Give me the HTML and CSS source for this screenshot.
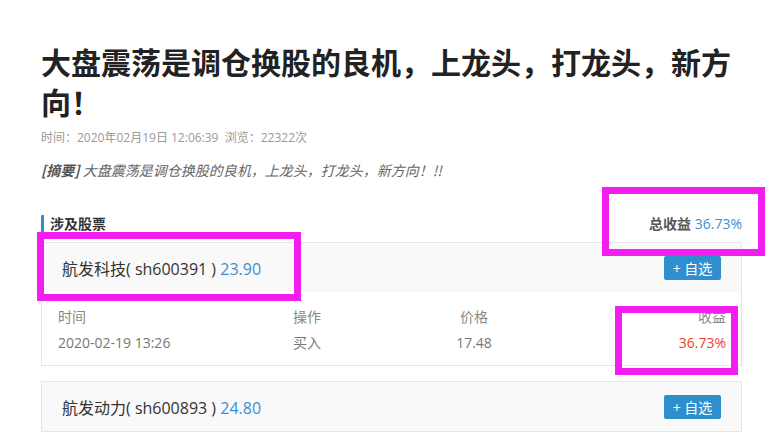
FILE: index.html
```html
<!DOCTYPE html>
<html lang="zh-CN">
<head>
  <meta charset="UTF-8">
  <meta name="viewport" content="width=device-width, initial-scale=1.0">
  <title>大盘震荡是调仓换股的良机</title>
  <link rel="stylesheet" href="styles.css">
</head>
<body>
  <div class="page">
    <h1 class="title">大盘震荡是调仓换股的良机，上龙头，打龙头，新方向！</h1>
    <p class="meta">时间：2020年02月19日 12:06:39 &nbsp;浏览：22322次</p>
    <p class="summary"><b>[摘要]</b> 大盘震荡是调仓换股的良机，上龙头，打龙头，新方向！!!</p>

    <div class="section-head">
      <h3 class="section-title">涉及股票</h3>
      <div class="total"><b>总收益</b> <span class="blue">36.73%</span></div>
    </div>

    <div class="stock">
      <div class="stock-head">
        <span class="stock-name">航发科技( sh600391 ) <span class="blue">23.90</span></span>
        <button class="add">+&nbsp;自选</button>
      </div>
      <div class="stock-body">
        <span class="label">时间</span>
        <span class="label">操作</span>
        <span class="label center">价格</span>
        <span class="label right">收益</span>
        <span class="value">2020-02-19 13:26</span>
        <span class="value">买入</span>
        <span class="value center">17.48</span>
        <span class="value right red">36.73%</span>
      </div>
    </div>

    <div class="stock">
      <div class="stock-head">
        <span class="stock-name">航发动力( sh600893 ) <span class="blue">24.80</span></span>
        <button class="add">+&nbsp;自选</button>
      </div>
    </div>

    <!-- highlight marks -->
    <div class="mark mark-name"></div>
    <div class="mark mark-total"></div>
    <div class="mark mark-profit"></div>
  </div>
</body>
</html>
```

FILE: styles.css
```css
/* General */
body {
  margin: 0;
  padding: 0;
  background: #fff;
  font-family: "Open Sans", "Noto Sans CJK SC", sans-serif;
  color: #333;
  overflow: hidden;
}

.page {
  position: relative;
  width: 701px;
  padding: 41px 0 0 41px;
}

.title {
  margin: 0;
  font-family: "Noto Sans CJK SC", sans-serif;
  font-size: 30px;
  line-height: 40px;
  font-weight: bold;
  color: #222;
}

.meta {
  margin: 7px 0 0;
  font-size: 12px;
  line-height: 20px;
  color: #999;
}

.summary {
  margin: 12px 0 0;
  font-family: "Noto Sans CJK SC", sans-serif;
  font-size: 14px;
  line-height: 20px;
  font-style: italic;
  color: #666;
}

.summary b {
  color: #555;
}

/* Section heading */
.section-head {
  display: flex;
  justify-content: space-between;
  align-items: center;
  margin-top: 33px;
  height: 20px;
}

.section-title {
  margin: 0;
  padding-left: 6px;
  border-left: 3px solid #2f8fce;
  border-radius: 1px;
  font-family: "Noto Sans CJK SC", sans-serif;
  font-size: 14px;
  line-height: 17px;
  font-weight: bold;
  color: #333;
}

.total {
  font-size: 14px;
  color: #555;
}

.blue {
  color: #3b8fd4;
}

.red {
  color: #f0442a;
}

/* Stock cards */
.stock {
  margin-top: 9px;
  border: 1px solid #e6e6e6;
}

.stock + .stock {
  margin-top: 15px;
}

.stock-head {
  display: flex;
  justify-content: space-between;
  align-items: center;
  height: 49px;
  padding: 0 20px 0 20px;
  background: #f9f9f9;
}

.stock-name {
  font-size: 16px;
  color: #333;
}

.add {
  width: 57px;
  height: 24px;
  padding: 0;
  border: none;
  border-radius: 2px;
  background: #2f8fce;
  color: #fff;
  font-family: inherit;
  font-size: 14px;
  cursor: pointer;
}

.stock-body {
  display: grid;
  grid-template-columns: 235px 135px 92px 1fr;
  row-gap: 6px;
  padding: 15px 15px 12px 16px;
  font-size: 14px;
  line-height: 20px;
}

.label {
  color: #888;
}

.value {
  color: #777;
}

.value.red {
  color: #f0442a;
}

.center {
  text-align: center;
}

.right {
  text-align: right;
}

/* Highlight marks drawn over the page */
.mark {
  position: absolute;
  border: 7px solid #f21ef0;
  box-sizing: border-box;
}

.mark-name {
  left: 37px;
  top: 232px;
  width: 264px;
  height: 69px;
}

.mark-total {
  left: 602px;
  top: 187px;
  width: 163px;
  height: 69px;
}

.mark-profit {
  left: 615px;
  top: 306px;
  width: 123px;
  height: 69px;
}
```
